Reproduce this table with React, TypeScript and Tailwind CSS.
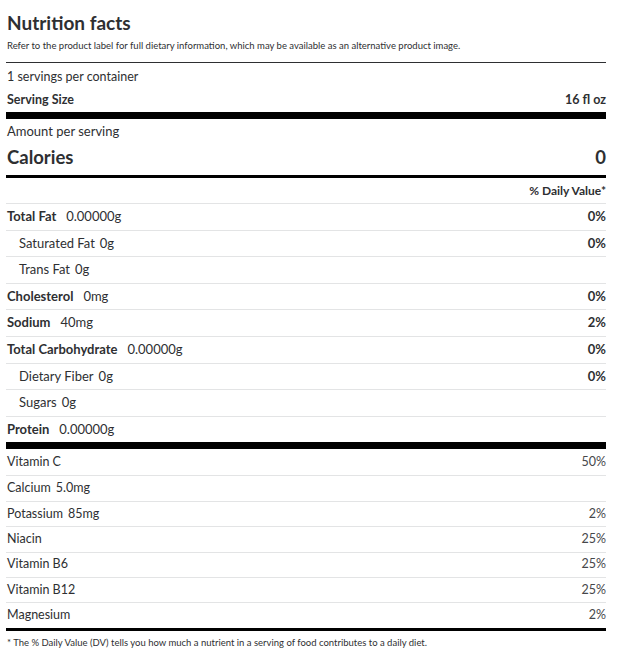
import React from "react";

type Row = {
  label: string;
  amount?: string;
  dv?: string;
  bold?: boolean;
  indent?: boolean;
};

const macros: Row[] = [
  { label: "Total Fat", amount: "0.00000g", dv: "0%", bold: true },
  { label: "Saturated Fat", amount: "0g", dv: "0%", indent: true },
  { label: "Trans Fat", amount: "0g", indent: true },
  { label: "Cholesterol", amount: "0mg", dv: "0%", bold: true },
  { label: "Sodium", amount: "40mg", dv: "2%", bold: true },
  { label: "Total Carbohydrate", amount: "0.00000g", dv: "0%", bold: true },
  { label: "Dietary Fiber", amount: "0g", dv: "0%", indent: true },
  { label: "Sugars", amount: "0g", indent: true },
  { label: "Protein", amount: "0.00000g", bold: true },
];

const micros: Row[] = [
  { label: "Vitamin C", dv: "50%" },
  { label: "Calcium", amount: "5.0mg" },
  { label: "Potassium", amount: "85mg", dv: "2%" },
  { label: "Niacin", dv: "25%" },
  { label: "Vitamin B6", dv: "25%" },
  { label: "Vitamin B12", dv: "25%" },
  { label: "Magnesium", dv: "2%" },
];

export default function App() {
  return (
    <div className="h-[653px] w-[619px] bg-white font-['Lato',sans-serif] text-[#2e2f32]">
      <div className="ml-[6px] w-[600px]">
        {/* header */}
        <h1 className="pl-px pt-[11px] text-[19px] font-bold leading-[24px]">Nutrition facts</h1>
        <p className="pl-px pt-[4px] text-[9.5px] leading-[14px]">
          Refer to the product label for full dietary information, which may be available as an alternative product image.
        </p>
        <div className="mt-[9px] h-px bg-[#2e2f32]" />

        {/* servings */}
        <div className="flex h-[28px] items-center pl-px text-[12.5px]">1 servings per container</div>
        <div className="flex h-[18px] items-center justify-between pl-px text-[12.5px] font-bold">
          <span>Serving Size</span>
          <span>16 fl oz</span>
        </div>
        <div className="mt-[3px] h-[7px] bg-black" />

        {/* calories */}
        <div className="flex h-[26px] items-center pl-px text-[13px]">Amount per serving</div>
        <div className="flex h-[26px] items-center justify-between pl-px text-[18.5px] font-bold">
          <span>Calories</span>
          <span>0</span>
        </div>
        <div className="mt-[4px] h-[3px] bg-black" />
        <div className="flex h-[25px] items-center justify-end text-[12px] font-bold">% Daily Value*</div>

        {/* macros */}
        {macros.map((r) => (
          <div
            key={r.label}
            className="flex h-[26.6px] items-center justify-between border-t border-[#e3e4e5] text-[13px]"
          >
            <span className={r.indent ? "pl-[13px]" : "pl-px"}>
              <span className={r.bold ? "font-bold" : ""}>{r.label}</span>
              {r.amount && <span className={r.bold ? "ml-[10px]" : "ml-[5px]"}>{r.amount}</span>}
            </span>
            {r.dv && <span className="font-bold">{r.dv}</span>}
          </div>
        ))}
        <div className="h-[7px] bg-black" />

        {/* vitamins & minerals */}
        {micros.map((r, i) => (
          <div
            key={r.label}
            className={
              i === 0
                ? "flex h-[26px] items-center justify-between text-[12.5px]"
                : "flex h-[25.4px] items-center justify-between border-t border-[#e3e4e5] text-[12.5px]"
            }
          >
            <span className="pl-px">
              {r.label}
              {r.amount && <span className="ml-[5px]">{r.amount}</span>}
            </span>
            {r.dv && <span className="text-[#46474a]">{r.dv}</span>}
          </div>
        ))}
        <div className="h-[3px] bg-black" />
        <p className="pl-px pt-[5px] text-[9.5px] leading-[14px]">
          * The % Daily Value (DV) tells you how much a nutrient in a serving of food contributes to a daily diet.
        </p>
      </div>
    </div>
  );
}
